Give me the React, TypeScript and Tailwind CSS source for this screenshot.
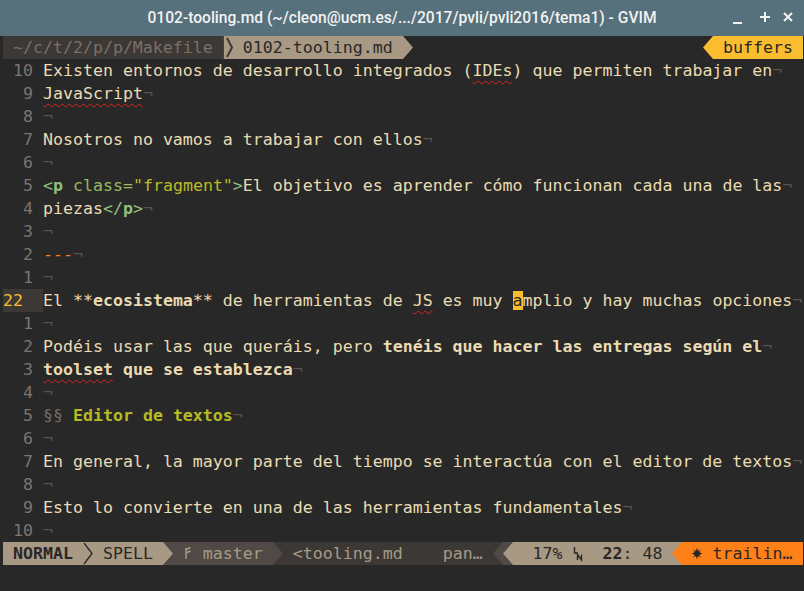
import React from "react";

type ArrowProps = { fill: string; className: string };

const ArrowR = ({ fill, className }: ArrowProps) => (
  <span className={`inline-block w-[10px] h-[23px] shrink-0 ${className}`}>
    <svg width="10" height="23" viewBox="0 0 10 23" className="block">
      <path d="M0 0 L10 11.5 L0 23 Z" fill={fill} />
    </svg>
  </span>
);

const ArrowL = ({ fill, className }: ArrowProps) => (
  <span className={`inline-block w-[10px] h-[23px] shrink-0 ${className}`}>
    <svg width="10" height="23" viewBox="0 0 10 23" className="block">
      <path d="M10 0 L0 11.5 L10 23 Z" fill={fill} />
    </svg>
  </span>
);

const ThinR = ({ stroke, className }: { stroke: string; className: string }) => (
  <span className={`inline-block w-[10px] h-[23px] shrink-0 ${className}`}>
    <svg width="10" height="23" viewBox="0 0 10 23" className="block">
      <path d="M1 1 L9 11.5 L1 22" fill="none" stroke={stroke} strokeWidth="1.3" />
    </svg>
  </span>
);

const NL = () => <span className="text-[#5a524c]">¬</span>;

const Spell = ({ children }: { children: React.ReactNode }) => (
  <span className="underline decoration-wavy decoration-[#e02020] decoration-1 underline-offset-[4px]">
    {children}
  </span>
);

const Row = ({
  num,
  current,
  children,
}: {
  num: string;
  current?: boolean;
  children?: React.ReactNode;
}) => (
  <div className="flex h-[23px] whitespace-pre">
    {current ? (
      <div className="w-[40px] shrink-0 bg-[#3c3836] text-[#fabd2f]">{num}</div>
    ) : (
      <div className="w-[40px] shrink-0 text-[#7c7470]">
        <span className="inline-block w-[30px] text-right">{num}</span>
      </div>
    )}
    <div className="text-[#ebdbb2]">{children}</div>
  </div>
);

const Branch = () => (
  <span className="inline-block w-[10px] h-[23px] shrink-0 bg-[#504945]">
    <svg width="10" height="23" viewBox="0 0 10 23" className="block">
      <path d="M3 6 L3 17 M3 7.5 L7.5 5.5 M3 11 L7.5 9" fill="none" stroke="#a89984" strokeWidth="1.5" />
    </svg>
  </span>
);

const LN = () => (
  <span className="inline-block w-[10px] h-[23px] shrink-0 bg-[#a89984]">
    <svg width="10" height="23" viewBox="0 0 10 23" className="block">
      <path d="M1.5 5 L1.5 11 L5 11" fill="none" stroke="#282828" strokeWidth="1.4" />
      <path d="M4.5 18 L4.5 12.5 L8.5 18 L8.5 12.5" fill="none" stroke="#282828" strokeWidth="1.4" />
    </svg>
  </span>
);

export default function App() {
  return (
    <div className="w-[804px] h-[591px] bg-[#282828] flex flex-col overflow-hidden font-['DejaVu_Sans_Mono',monospace] text-[16.6px] leading-[23px] text-[#ebdbb2]">
      {/* Title bar */}
      <div className="h-[36px] shrink-0 bg-[#56707c] flex items-center">
        <div className="w-[80px] shrink-0" />
        <div className="flex-1 text-center font-['Roboto',sans-serif] font-medium text-[15.6px] text-[#f2f2f2] leading-[36px] whitespace-nowrap">
          0102-tooling.md (~/cleon@ucm.es/.../2017/pvli/pvli2016/tema1) - GVIM
        </div>
        <div className="w-[80px] shrink-0 h-[36px]">
          <svg width="80" height="36" viewBox="0 0 80 36" className="block">
            <path d="M9 23 L18 23" stroke="#f2f2f2" strokeWidth="2" />
            <path d="M36 17 L46 17 M41 12 L41 22" stroke="#f2f2f2" strokeWidth="2" />
            <path d="M60 13 L68 21 M68 13 L60 21" stroke="#f2f2f2" strokeWidth="2" />
          </svg>
        </div>
      </div>

      <div className="pl-[3px] flex flex-col">
        {/* Tabline */}
        <div className="flex h-[23px] w-[800px] whitespace-pre">
          <span className="bg-[#3c3836] text-[#7c6f64]"> ~/c/t/2/p/p/Makefile </span>
          <span className="inline-block w-[10px] h-[23px] shrink-0 bg-[#a89984]">
            <svg width="10" height="23" viewBox="0 0 10 23" className="block">
              <path d="M0 0 L1 0 L1 23 L0 23 Z" fill="#5e3b2e" />
              <path d="M4 2 L9 11.5 L4 21" fill="none" stroke="#3c3836" strokeWidth="2" />
            </svg>
          </span>
          <span className="bg-[#a89984] text-[#282828]"> 0102-tooling.md </span>
          <ArrowR fill="#a89984" className="bg-[#282828]" />
          <span className="flex-1" />
          <ArrowL fill="#fabd2f" className="bg-[#282828]" />
          <span className="bg-[#fabd2f] text-[#282828]"> buffers </span>
        </div>

        {/* Buffer lines */}
        <Row num="10">
          Existen entornos de desarrollo integrados (<Spell>IDEs</Spell>) que permiten trabajar en<NL />
        </Row>
        <Row num="9">
          <Spell>JavaScript</Spell>
          <NL />
        </Row>
        <Row num="8">
          <NL />
        </Row>
        <Row num="7">
          Nosotros no vamos a trabajar con ellos<NL />
        </Row>
        <Row num="6">
          <NL />
        </Row>
        <Row num="5">
          <span className="text-[#8ec07c]">&lt;</span>
          <span className="text-[#8ec07c] font-bold">p</span>{" "}
          <span className="text-[#99b863]">class=</span>
          <span className="text-[#b8bb26]">"fragment"</span>
          <span className="text-[#8ec07c]">&gt;</span>El objetivo es aprender cómo funcionan cada una de las<NL />
        </Row>
        <Row num="4">
          piezas<span className="text-[#8ec07c]">&lt;/</span>
          <span className="text-[#8ec07c] font-bold">p</span>
          <span className="text-[#8ec07c]">&gt;</span>
          <NL />
        </Row>
        <Row num="3">
          <NL />
        </Row>
        <Row num="2">
          <span className="text-[#fe8019]">---</span>
          <NL />
        </Row>
        <Row num="1">
          <NL />
        </Row>
        <Row num="22" current>
          El **<span className="font-bold">ecosistema</span>** de herramientas de <Spell>JS</Spell> es muy{" "}
          <span className="bg-[#fabd2f] text-[#282828]">a</span>mplio y hay muchas opciones<NL />
        </Row>
        <Row num="1">
          <NL />
        </Row>
        <Row num="2">
          Podéis usar las que queráis, pero{" "}
          <span className="font-bold">tenéis que hacer las entregas según el</span>
          <NL />
        </Row>
        <Row num="3">
          <span className="font-bold">
            <Spell>toolset</Spell> que se establezca
          </span>
          <NL />
        </Row>
        <Row num="4">
          <NL />
        </Row>
        <Row num="5">
          <span className="text-[#7c6f64]">§§</span>
          <span className="text-[#b8bb26] font-bold"> Editor de textos</span>
          <NL />
        </Row>
        <Row num="6">
          <NL />
        </Row>
        <Row num="7">
          En general, la mayor parte del tiempo se interactúa con el editor de textos<NL />
        </Row>
        <Row num="8">
          <NL />
        </Row>
        <Row num="9">
          Esto lo convierte en una de las herramientas fundamentales<NL />
        </Row>
        <Row num="10">
          <NL />
        </Row>

        {/* Status line */}
        <div className="flex h-[23px] w-[800px] whitespace-pre">
          <span className="bg-[#a89984] text-[#282828] font-bold"> NORMAL </span>
          <ThinR stroke="#282828" className="bg-[#a89984]" />
          <span className="bg-[#a89984] text-[#282828]"> SPELL </span>
          <ArrowR fill="#a89984" className="bg-[#504945]" />
          <span className="bg-[#504945] text-[#a89984]"> </span>
          <Branch />
          <span className="bg-[#504945] text-[#a89984]"> master </span>
          <ArrowR fill="#504945" className="bg-[#3c3836]" />
          <span className="bg-[#3c3836] text-[#a89984]"> &lt;tooling.md    pan… </span>
          <ArrowL fill="#504945" className="bg-[#3c3836]" />
          <ArrowL fill="#a89984" className="bg-[#504945]" />
          <span className="bg-[#a89984] text-[#282828]">  17% </span>
          <LN />
          <span className="bg-[#a89984] text-[#282828]">  </span>
          <span className="bg-[#a89984] text-[#282828] font-bold">22</span>
          <span className="bg-[#a89984] text-[#282828]">: 48 </span>
          <ArrowL fill="#fe8019" className="bg-[#a89984]" />
          <span className="bg-[#fe8019] text-[#282828]"> </span>
          <span className="inline-block w-[10px] h-[23px] shrink-0 bg-[#fe8019]">
            <svg width="10" height="23" viewBox="0 0 10 23" className="block">
              <g fill="#282828">
                <circle cx="5" cy="11.5" r="3" />
                <path d="M5 5.5 L6 9 L4 9 Z M5 17.5 L6 14 L4 14 Z M-1 11.5 L2.5 10.5 L2.5 12.5 Z M11 11.5 L7.5 10.5 L7.5 12.5 Z" />
                <path d="M0.8 7.3 L3.6 9 L2.8 9.8 Z M9.2 7.3 L6.4 9 L7.2 9.8 Z M0.8 15.7 L3.6 14 L2.8 13.2 Z M9.2 15.7 L6.4 14 L7.2 13.2 Z" />
              </g>
            </svg>
          </span>
          <span className="bg-[#fe8019] text-[#282828] flex-1"> trailin… </span>
        </div>
      </div>
    </div>
  );
}
